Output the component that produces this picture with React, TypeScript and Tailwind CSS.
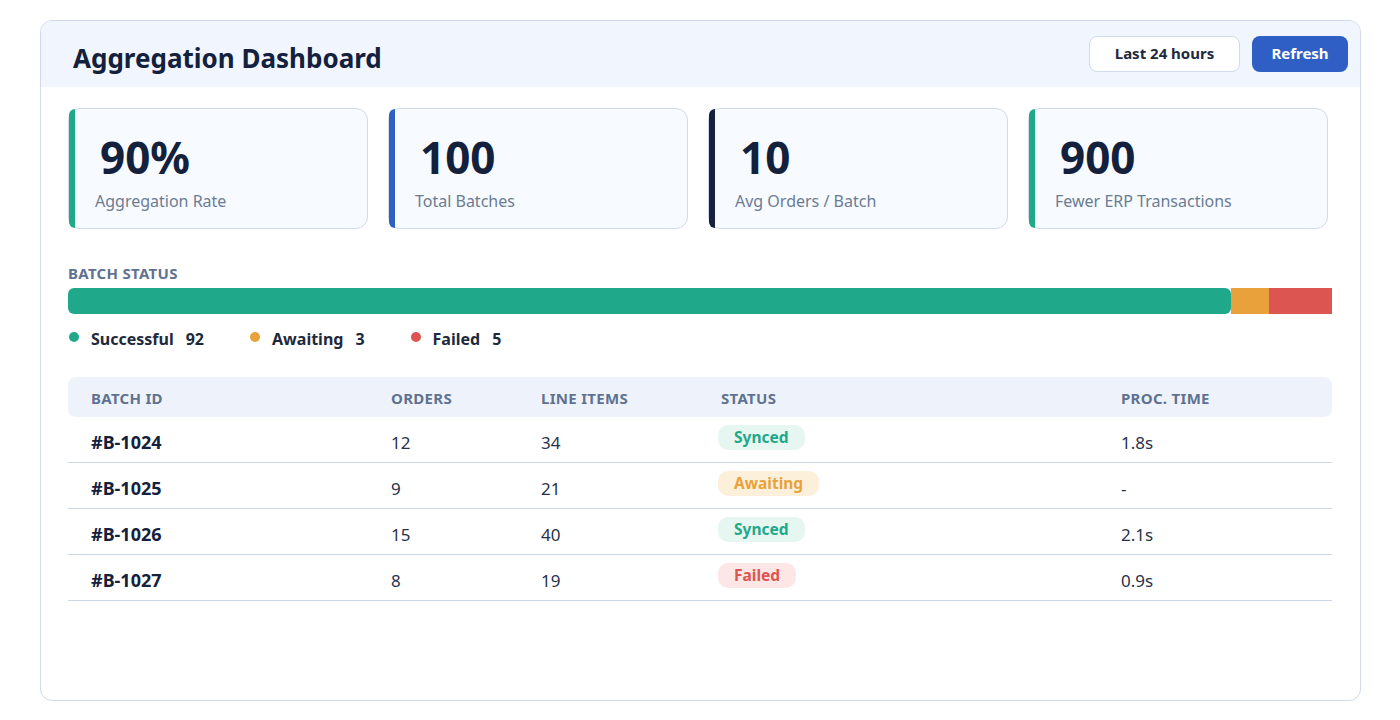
import React from "react";

type Stat = { value: string; label: string; accent: string };
type Batch = { id: string; orders: number; items: number; status: "Synced" | "Awaiting" | "Failed"; time: string };

const stats: Stat[] = [
  { value: "90%", label: "Aggregation Rate", accent: "bg-[#1fa98a]" },
  { value: "100", label: "Total Batches", accent: "bg-[#2f5fc4]" },
  { value: "10", label: "Avg Orders / Batch", accent: "bg-[#16213e]" },
  { value: "900", label: "Fewer ERP Transactions", accent: "bg-[#1fa98a]" },
];

const batches: Batch[] = [
  { id: "#B-1024", orders: 12, items: 34, status: "Synced", time: "1.8s" },
  { id: "#B-1025", orders: 9, items: 21, status: "Awaiting", time: "-" },
  { id: "#B-1026", orders: 15, items: 40, status: "Synced", time: "2.1s" },
  { id: "#B-1027", orders: 8, items: 19, status: "Failed", time: "0.9s" },
];

const badgeStyles: Record<Batch["status"], string> = {
  Synced: "bg-[#e6f7f1] text-[#1fa98a]",
  Awaiting: "bg-[#fdf0db] text-[#e9a23b]",
  Failed: "bg-[#fce6e6] text-[#dc5550]",
};

const cols = "grid grid-cols-[300px_150px_180px_400px_1fr]";

export default function App() {
  return (
    <div className="min-h-screen bg-white pt-5 pl-10 font-['Noto_Sans','Open_Sans',sans-serif]">
      <div className="w-[1321px] h-[681px] rounded-xl border border-[#cfdbe8] overflow-hidden bg-white">
        <header className="h-[66px] bg-[#f1f5fd] flex items-center justify-between pl-8 pr-3">
          <h1 className="text-[26px] font-bold text-[#14213d] mt-2">Aggregation Dashboard</h1>
          <div className="flex items-center gap-3 -mt-[1px]">
            <button className="h-9 w-[151px] rounded-lg border border-[#cfdbe8] bg-white text-[15px] font-bold text-[#1e293b]">
              Last 24 hours
            </button>
            <button className="h-9 w-24 rounded-lg bg-[#2f5fc4] text-[15px] font-bold text-white">Refresh</button>
          </div>
        </header>

        <main className="pl-[27px] pr-[28px] pt-[21px]">
          <div className="grid grid-cols-[repeat(4,300px)] gap-5">
            {stats.map((s) => (
              <div key={s.label} className="relative h-[121px] rounded-xl border border-[#cfdbe8] bg-[#f7faff] pl-[26px] pt-[20px]">
                <span className={`absolute left-0 top-0 bottom-0 w-[6px] rounded-l-xl ${s.accent}`} />
                <div className="text-[44px] leading-[56px] font-bold text-[#14213d] pl-[5px]">{s.value}</div>
                <div className="text-[16px] text-[#6b7c93] mt-[4px]">{s.label}</div>
              </div>
            ))}
          </div>

          <div className="mt-[33px] text-[15px] tracking-[0.3px] font-bold text-[#5f7291] uppercase">Batch Status</div>
          <div className="mt-[3px] flex h-[26px]">
            <div className="w-[92%] rounded-md bg-[#1fa98a]" />
            <div className="w-[3%] bg-[#e9a23b]" />
            <div className="w-[5%] bg-[#dc5550]" />
          </div>
          <div className="mt-[13px] flex items-center gap-[46px] text-[16px] font-bold text-[#1e293b]">
            <span className="flex items-center gap-3">
              <span className="w-[10px] h-[10px] rounded-full bg-[#1fa98a] ml-[1px] -mt-[3px]" />
              Successful<span>92</span>
            </span>
            <span className="flex items-center gap-3">
              <span className="w-[10px] h-[10px] rounded-full bg-[#e9a23b] -mt-[3px]" />
              Awaiting<span>3</span>
            </span>
            <span className="flex items-center gap-3">
              <span className="w-[10px] h-[10px] rounded-full bg-[#dc5550] -mt-[3px]" />
              Failed<span>5</span>
            </span>
          </div>

          <div className="mt-[26px]">
            <div className={`${cols} h-[40px] items-center rounded-lg bg-[#eef3fb] px-[23px] pt-[3px] text-[15px] tracking-[0.3px] font-bold uppercase text-[#5f7291]`}>
              <div>Batch ID</div>
              <div>Orders</div>
              <div>Line Items</div>
              <div>Status</div>
              <div>Proc. Time</div>
            </div>
            {batches.map((b) => (
              <div key={b.id} className={`${cols} h-[46px] items-center border-b border-[#cad8e5] px-[23px] text-[17px] text-[#27324a]`}>
                <div className="text-[18px] font-bold text-[#14213d] pt-[7px]">{b.id}</div>
                <div className="pt-[8px]">{b.orders}</div>
                <div className="pt-[8px]">{b.items}</div>
                <div className="-ml-[3px] -mt-[4px]">
                  <span className={`inline-block rounded-[10px] px-4 h-[25px] leading-[25px] text-[15.5px] font-bold ${badgeStyles[b.status]}`}>
                    {b.status}
                  </span>
                </div>
                <div className="pt-[8px]">{b.time}</div>
              </div>
            ))}
          </div>
        </main>
      </div>
    </div>
  );
}
